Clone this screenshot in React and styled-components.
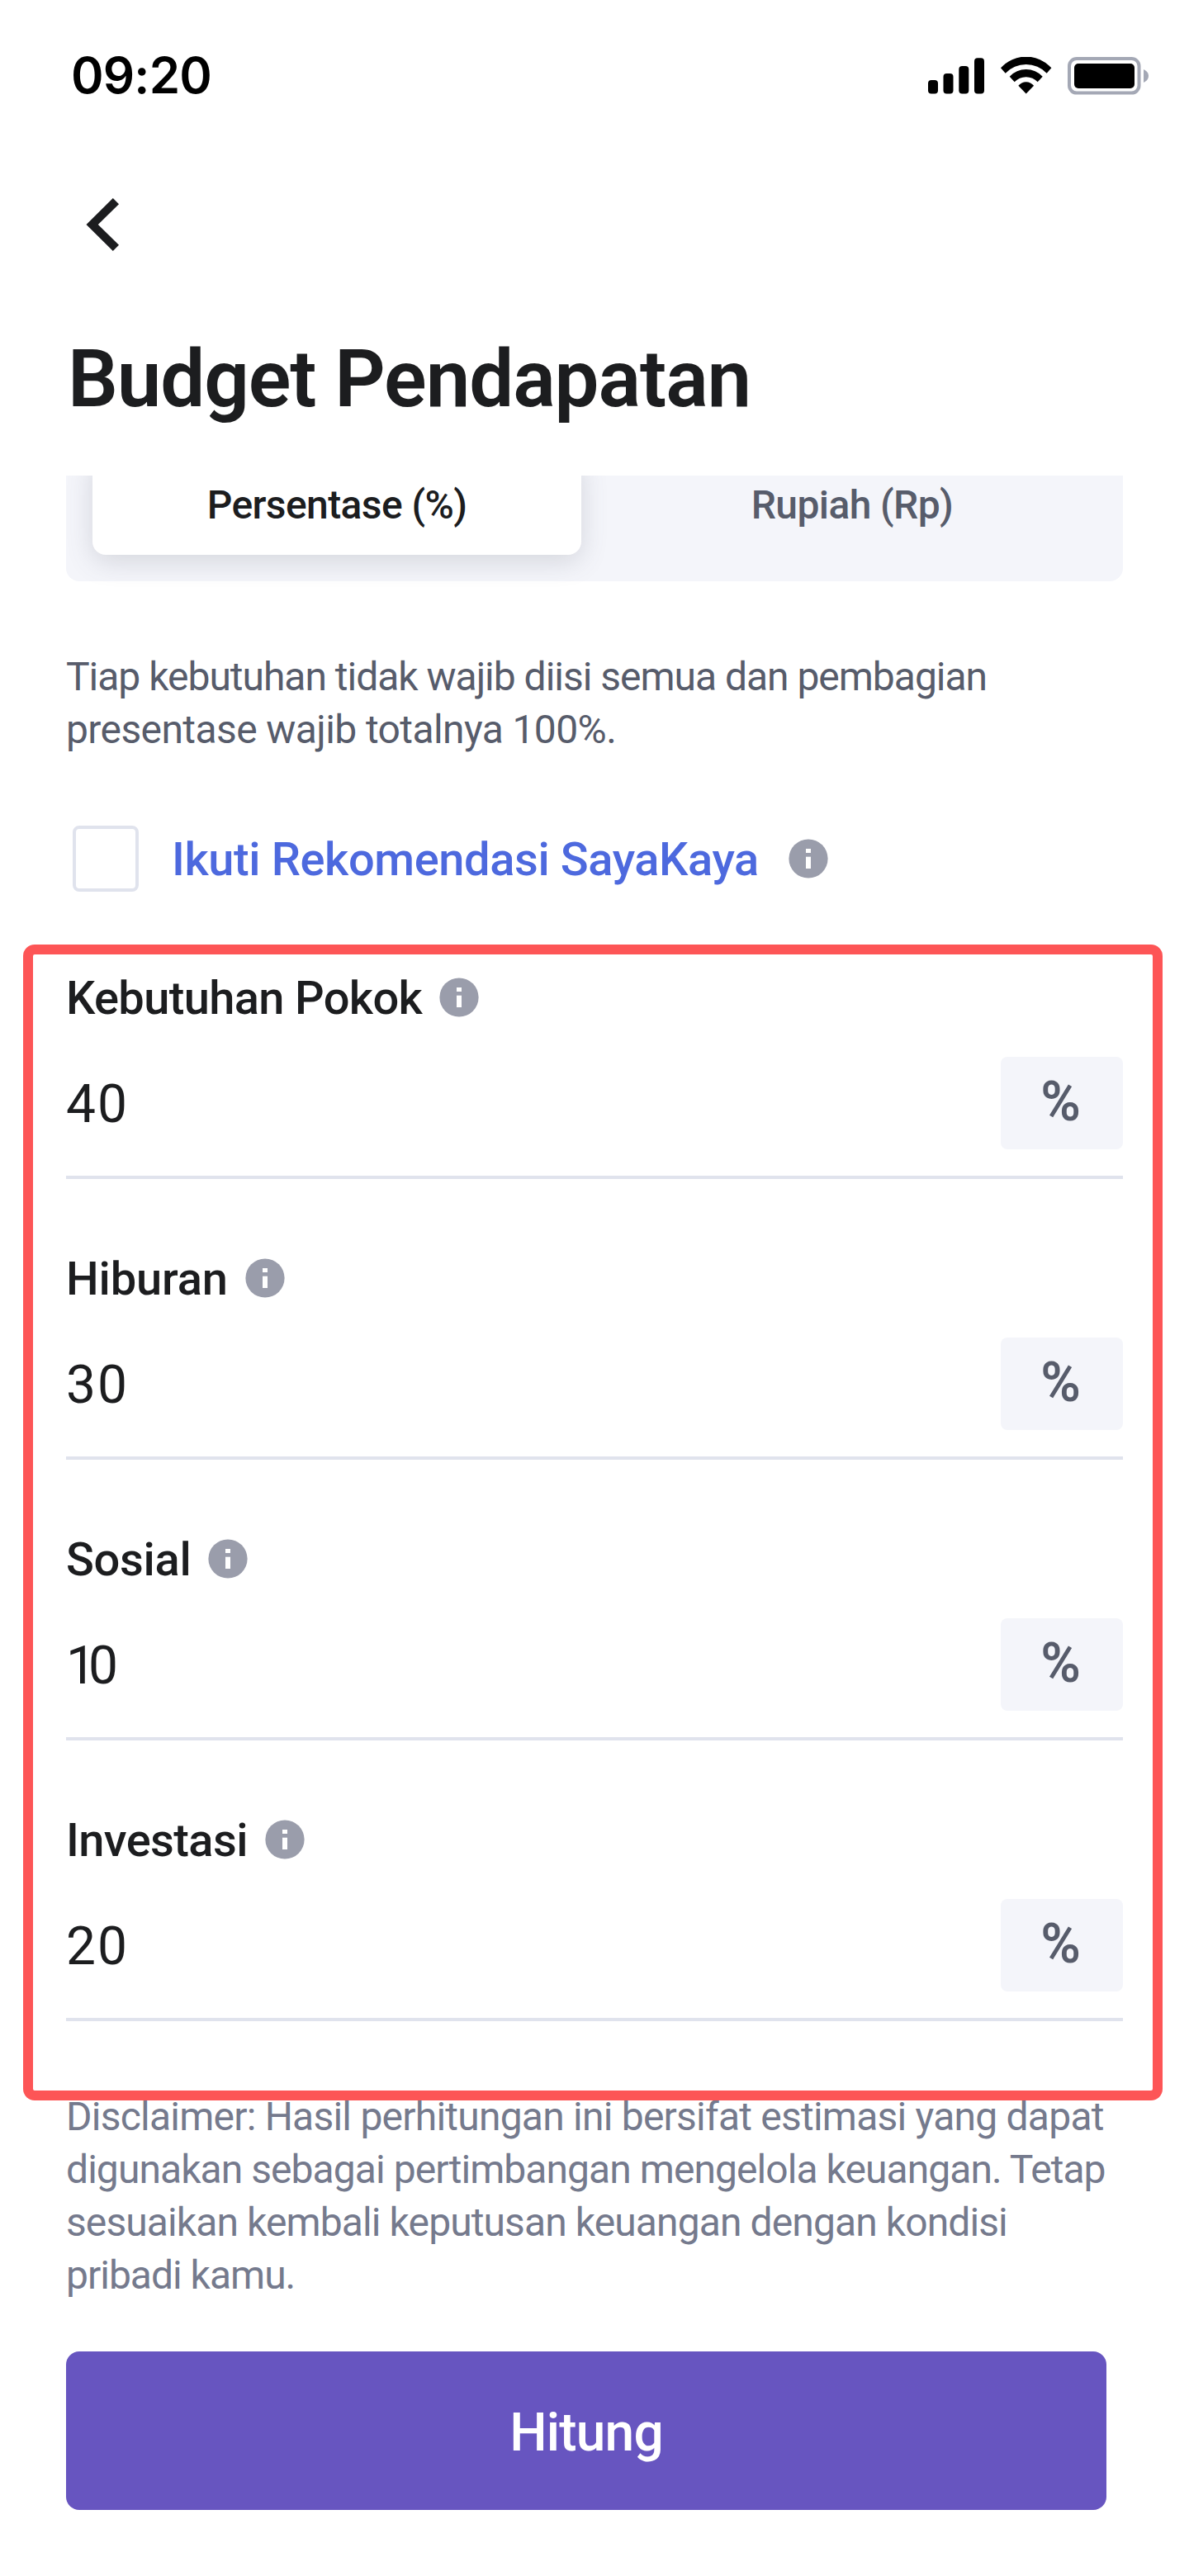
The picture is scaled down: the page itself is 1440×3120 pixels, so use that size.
import styled, { createGlobalStyle } from "styled-components"

const GlobalStyle = createGlobalStyle`
  body {
    margin: 0;
    background-color: #ffffff;
    font-family: Roboto, sans-serif;
    color: #1c1d1f;
  }
`

const Screen = styled.div`
  display: flex;
  flex-direction: column;
  width: 1440px;
  height: 3120px;
  overflow: hidden;
`

const StatusBar = styled.div`
  display: flex;
  align-items: center;
  justify-content: space-between;
  box-sizing: border-box;
  height: 184px;
  padding: 0 49px 0 86px;
`

const Clock = styled.span`
  padding-bottom: 3px;
  font-family: Inter, sans-serif;
  font-size: 60px;
  font-weight: 600;
  line-height: 72px;
  letter-spacing: -0.8px;
  color: #000000;
`

const StatusIcons = styled.div`
  display: flex;
  gap: 18px;
`

const BackButton = styled.button`
  display: flex;
  align-self: flex-start;
  margin: 56px 0 0 104px;
  padding: 0;
  border: none;
  background: none;
`

const Title = styled.h1`
  margin: 99px 80px 0 82px;
  font-size: 96px;
  font-weight: 600;
  line-height: 112px;
  letter-spacing: -1.1px;
`

const ScrollArea = styled.div`
  display: flex;
  flex-direction: column;
  margin-top: 61px;
  overflow: hidden;
`

const Tabs = styled.div`
  display: flex;
  gap: 32px;
  margin: -56px 80px 0;
  padding: 32px;
  background-color: #f4f5fa;
  border-radius: 16px;
`

const Tab = styled.div`
  flex: 1;
  padding: 28px 0;
  border-radius: 16px;
  font-size: 48px;
  font-weight: 500;
  line-height: 64px;
  letter-spacing: -0.6px;
  text-align: center;
  color: ${({ $active }) => ($active ? "#1c1d1f" : "#575c6b")};
  background-color: ${({ $active }) => ($active ? "#ffffff" : "transparent")};
  box-shadow: ${({ $active }) => ($active ? "0 8px 32px rgba(87, 92, 107, 0.2)" : "none")};
`

const Paragraph = styled.p`
  margin: ${({ $margin }) => $margin};
  font-size: 48px;
  line-height: 64px;
  white-space: nowrap;
  color: ${({ $color }) => $color};
`

const Line = styled.span`
  display: block;
  letter-spacing: ${({ $spacing }) => $spacing}px;
`

const Recommendation = styled.div`
  display: flex;
  align-items: center;
  margin: 84px 0 0 88px;
`

const Checkbox = styled.div`
  box-sizing: border-box;
  width: 80px;
  height: 80px;
  border: 4px solid #e0e3ed;
  border-radius: 8px;
`

const RecommendationText = styled.span`
  margin: 0 36px 0 40px;
  padding-top: 2px;
  font-size: 56px;
  font-weight: 500;
  line-height: 72px;
  letter-spacing: -0.4px;
  color: #4d69de;
`

const Highlight = styled.section`
  position: relative;
  display: flex;
  flex-direction: column;
  gap: 84px;
  margin: 64px 32px 0 28px;
  padding: 16px 36px 84px 40px;
  border: 12px solid #fd5556;
  border-radius: 14px;
`

const LabelRow = styled.div`
  display: flex;
  align-items: center;
  gap: 21px;
  height: 72px;
`

const Label = styled.span`
  padding-top: 2px;
  font-size: 56px;
  font-weight: 500;
  line-height: 70px;
  letter-spacing: ${({ $spacing }) => $spacing}px;
`

const ValueRow = styled.div`
  display: flex;
  align-items: center;
  justify-content: space-between;
  height: 112px;
  margin-top: 36px;
  padding-bottom: 32px;
  border-bottom: 4px solid #e0e3ed;
`

const Value = styled.span`
  padding-top: 4px;
  font-size: 64px;
  line-height: 80px;
  letter-spacing: ${({ $spacing }) => $spacing}px;
`

const Unit = styled.span`
  box-sizing: border-box;
  width: 148px;
  height: 112px;
  padding-right: 3px;
  border-radius: 8px;
  background-color: #f4f5fa;
  font-size: 66px;
  font-weight: 600;
  line-height: 109px;
  text-align: center;
  color: #575c6b;
`

const SubmitButton = styled.button`
  width: 1260px;
  height: 192px;
  margin: 60px 0 0 80px;
  padding: 4px 0 0;
  border: none;
  border-radius: 16px;
  background-color: #6755c0;
  font-family: inherit;
  font-size: 64px;
  font-weight: 500;
  letter-spacing: -0.8px;
  color: #ffffff;
`

const SignalIcon = () => (
  <svg width="69" height="46" viewBox="44 29 69 46">
    <rect x="44" y="57" width="12" height="16.6" rx="4" />
    <rect x="62.5" y="49" width="12" height="24.6" rx="4" />
    <rect x="81.3" y="40" width="12" height="33.6" rx="4" />
    <rect x="100" y="30.3" width="12" height="43.3" rx="4" />
  </svg>
)

const WifiIcon = () => (
  <svg width="64" height="46" viewBox="131 29 64 46">
    <path d="M132 42.3A41.2 41.2 0 0 1 193.4 42.3L187.7 48.7A34.5 34.5 0 0 0 137.7 48.7Z" />
    <path d="M142.7 52.7A27.3 27.3 0 0 1 182.7 52.7L176.7 59.2A19.3 19.3 0 0 0 148.7 59.2Z" />
    <path d="M153.3 63.7A12.3 12.3 0 0 1 172.1 63.7L162.7 73.4Z" />
  </svg>
)

const BatteryIcon = () => (
  <svg width="98" height="46" viewBox="213 29 98 46">
    <rect x="215" y="31" width="84.5" height="41.6" rx="9" fill="none" stroke="#a4a8b5" strokeWidth="4" />
    <rect x="221" y="37" width="73" height="30" rx="5" />
    <path d="M305 44c3.5 1.5 6 4.6 6 8s-2.5 6.5-6 8z" fill="#a4a8b5" />
  </svg>
)

const ChevronIcon = () => (
  <svg width="41" height="64" viewBox="0 0 41 64" fill="#1c1d1f">
    <path d="M32.8 0L40 7.2L14.8 32L40 56.8L32.8 64L0.5 32Z" />
  </svg>
)

const InfoIcon = () => (
  <svg width="48" height="48" viewBox="0 0 48 48">
    <circle cx="24" cy="24" r="23.6" fill="#9a9dab" />
    <rect x="21" y="12" width="6" height="5" fill="#ffffff" />
    <rect x="21" y="21.7" width="6" height="14.3" fill="#ffffff" />
  </svg>
)

const fields = [
  { label: "Kebutuhan Pokok", value: 40, spacing: -0.65 },
  { label: "Hiburan", value: 30, spacing: -0.15 },
  { label: "Sosial", value: 10, spacing: -0.3, valueSpacing: -9 },
  { label: "Investasi", value: 20, spacing: -0.6 },
]

const Field = ({ label, value, spacing, valueSpacing = 2 }) => (
  <div>
    <LabelRow>
      <Label $spacing={spacing}>{label}</Label>
      <InfoIcon />
    </LabelRow>
    <ValueRow>
      <Value $spacing={valueSpacing}>{value}</Value>
      <Unit>%</Unit>
    </ValueRow>
  </div>
)

const App = () => {
  return (
    <Screen>
      <GlobalStyle />
      <StatusBar>
        <Clock>09:20</Clock>
        <StatusIcons>
          <SignalIcon />
          <WifiIcon />
          <BatteryIcon />
        </StatusIcons>
      </StatusBar>
      <BackButton aria-label="Kembali">
        <ChevronIcon />
      </BackButton>
      <Title>Budget Pendapatan</Title>
      <ScrollArea>
        <Tabs>
          <Tab $active>Persentase (%)</Tab>
          <Tab>Rupiah (Rp)</Tab>
        </Tabs>
        <Paragraph $margin="84px 80px 0" $color="#575c6b">
          <Line $spacing={-1.02}>Tiap kebutuhan tidak wajib diisi semua dan pembagian</Line>
          <Line $spacing={-0.6}>presentase wajib totalnya 100%.</Line>
        </Paragraph>
        <Recommendation>
          <Checkbox />
          <RecommendationText>Ikuti Rekomendasi SayaKaya</RecommendationText>
          <InfoIcon />
        </Recommendation>
        <Highlight>
          {fields.map((field) => (
            <Field key={field.label} {...field} />
          ))}
        </Highlight>
        <Paragraph $margin="-12px 80px 0" $color="#757a8d">
          <Line $spacing={-0.77}>Disclaimer: Hasil perhitungan ini bersifat estimasi yang dapat</Line>
          <Line $spacing={-0.94}>digunakan sebagai pertimbangan mengelola keuangan. Tetap</Line>
          <Line $spacing={-0.9}>sesuaikan kembali keputusan keuangan dengan kondisi</Line>
          <Line $spacing={-1}>pribadi kamu.</Line>
        </Paragraph>
        <SubmitButton>Hitung</SubmitButton>
      </ScrollArea>
    </Screen>
  )
}

export default App
